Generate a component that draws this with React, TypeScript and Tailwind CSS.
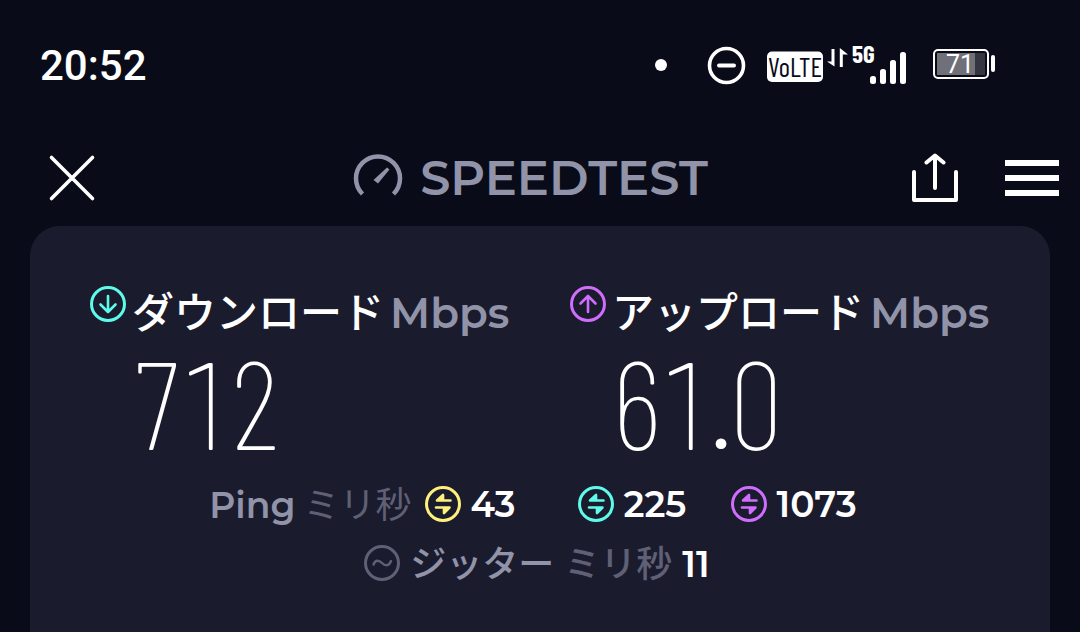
import type { ReactNode } from "react";

const LATIN = "font-['Montserrat',Inter,'Noto_Sans_CJK_JP',sans-serif]";
const NARROW = "font-['Barlow_Condensed','Roboto_Condensed',Roboto,sans-serif]";

function StatusBar() {
  return (
    <div className="flex h-[132px] items-center justify-between pl-10 pr-[84px] font-[Roboto,sans-serif] text-white">
      <time className="text-[42px] leading-[48px] font-medium">20:52</time>
      {/* system icons: notification dot, do-not-disturb, network, battery */}
      <svg width="342" height="72" viewBox="654 30 342 72" role="img" aria-label="System status">
        <circle cx="661" cy="65" r="6" fill="#fff" />
        <circle cx="726.500" cy="65.500" r="17" fill="none" stroke="#fff" strokeWidth="3.600" />
        <path d="M719 65.500h15" stroke="#fff" strokeWidth="4" strokeLinecap="round" />
        <rect x="767" y="51.500" width="56" height="30.500" rx="5" fill="#fff" />
        <text x="795" y="77" textAnchor="middle" className={`fill-[#0a0b19] ${NARROW} text-[27px]`}>VoLTE</text>
        <path d="M831.500 49h3v17.500L827 61.500h4.500z" fill="#fff" />
        <path d="M839.800 67h3V54.500H848L839.800 48z" fill="#fff" />
        <text x="852" y="63" className={`fill-white ${NARROW} text-[25px] font-bold`}>5G</text>
        <rect x="870" y="76" width="6" height="8" rx="2.500" fill="#fff" />
        <rect x="880" y="69" width="6" height="15" rx="2.500" fill="#fff" />
        <rect x="890" y="60" width="6" height="24" rx="2.500" fill="#fff" />
        <rect x="900" y="52" width="6" height="32" rx="2.500" fill="#fff" />
        <rect x="934" y="50" width="54" height="28" rx="4" fill="none" stroke="#fff" strokeWidth="2" />
        <rect x="937" y="53" width="48" height="22" fill="#353542" />
        <rect x="937" y="53" width="38" height="22" fill="#707078" />
        <rect x="991" y="55" width="4" height="17" rx="2" fill="#fff" />
        <text x="960" y="73" textAnchor="middle" className="fill-white text-[25px]">71</text>
      </svg>
    </div>
  );
}

function Header() {
  return (
    <header className="mb-0.5 flex h-[92px] items-center justify-between pl-12 pr-[21px]">
      <button type="button" aria-label="Close" className="flex w-[134px]">
        <svg width="48" height="48" viewBox="0 0 48 48" fill="none" stroke="#fff" strokeWidth="3.600" strokeLinecap="round">
          <path d="M3.500 3.500 44.500 44.500M44.500 3.500 3.500 44.500" />
        </svg>
      </button>
      <h1 className="flex items-center gap-[17px] text-[#9193a8]">
        <svg width="50" height="50" viewBox="353 152 50 50" aria-hidden="true">
          <path d="M362.500 193A22 22 0 1 1 393.500 193" fill="none" stroke="currentColor" strokeWidth="4.500" />
          <path d="M387 166.500 389.500 168.500 378 182.500 373.500 179z" fill="currentColor" />
        </svg>
        <span className={`${LATIN} text-[48px] leading-[50px] font-semibold`}>SPEEDTEST</span>
      </h1>
      <div className="flex w-[180px] items-center justify-end gap-[45px]">
        <button type="button" aria-label="Share">
          <svg width="50" height="50" viewBox="910 153 50 50" fill="none" stroke="#fff" strokeWidth="4" strokeLinecap="round" strokeLinejoin="round">
            <path d="M914 172V200H956V172M935 188V156M926.500 162.500 935 155.500 943.500 162.500" />
          </svg>
        </button>
        <button type="button" aria-label="Menu">
          <svg width="54" height="36" viewBox="0 0 54 36" fill="#fff">
            <path d="M0 0h54v6H0zM0 15h54v6H0zM0 30h54v6H0z" />
          </svg>
        </button>
      </div>
    </header>
  );
}

function RoundIcon({ className, children }: { className: string; children: ReactNode }) {
  return (
    <svg width="36" height="36" viewBox="0 0 36 36" fill="none" stroke="currentColor" strokeLinecap="round" strokeLinejoin="round" className={`shrink-0 ${className}`} aria-hidden="true">
      <circle cx="18" cy="18" r="16.500" strokeWidth="3" />
      {children}
    </svg>
  );
}

function Speed({ label, value, color, arrow }: { label: string; value: string; color: string; arrow: string }) {
  return (
    <section className="flex items-start gap-1.5">
      <RoundIcon className={color}>
        <path d={arrow} strokeWidth="2.600" />
      </RoundIcon>
      <div>
        <h2 className="flex items-baseline gap-1.5 whitespace-nowrap text-[42px] leading-[48px]">
          <span className="font-['Noto_Sans_CJK_JP',sans-serif] font-medium text-white">{label}</span>
          <span className={`${LATIN} font-semibold text-[#9193a8]`}>Mbps</span>
        </h2>
        <p className={`mt-2 ${NARROW} text-[124px] leading-[112px] font-extralight tabular-nums text-white`}>
          {value}
        </p>
      </div>
    </section>
  );
}

function Latency({ value, color }: { value: string; color: string }) {
  return (
    <span className="flex min-w-[108px] items-center gap-[9px]">
      <RoundIcon className={color}>
        {/* opposed half-arrows, filled at the barbs */}
        <path d="M25.500 14.500H12L18 9V14.500M11 21.500H24.500L19 27V21.500" fill="currentColor" strokeWidth="2.600" />
      </RoundIcon>
      <span className={`${LATIN} font-semibold text-white`}>{value}</span>
    </span>
  );
}

export default function App() {
  return (
    <div className="flex min-h-screen flex-col bg-[#0a0b19]">
      <StatusBar />
      <Header />
      <main className="mx-[30px] flex-1 rounded-t-[30px] bg-[#1b1b2e] pt-[60px] text-[36px] leading-[44px]">
        <div className="grid grid-cols-2 pl-[60px]">
          <Speed label="ダウンロード" value="712" color="text-[#5ffbea]" arrow="M18 10V26M10.500 18.500 18 26 25.500 18.500" />
          <Speed label="アップロード" value="61.0" color="text-[#cf6dfc]" arrow="M18 26V10M10.500 17.500 18 10 25.500 17.500" />
        </div>
        <div className="mt-[23px] flex items-center justify-center gap-[45px] pr-3.5">
          <div className="flex items-center gap-3.5">
            <span className="flex items-baseline gap-2">
              <span className={`${LATIN} font-semibold text-[#9193a8]`}>Ping</span>
              <span className="font-['Noto_Sans_CJK_JP',sans-serif] font-normal text-[#5f6075]">ミリ秒</span>
            </span>
            <Latency value="43" color="text-[#fff07c]" />
          </div>
          <Latency value="225" color="text-[#5ffbea]" />
          <Latency value="1073" color="text-[#cf6dfc]" />
        </div>
        <div className="mt-3 flex items-center justify-center gap-2.5 pr-1.5">
          <RoundIcon className="text-[#5f6075]">
            <path d="M9.500 19.500C11 15 14.500 14.500 18 18S25 21 27 16" strokeWidth="2.400" />
          </RoundIcon>
          <span className="flex items-baseline gap-2.5">
            <span className="font-['Noto_Sans_CJK_JP',sans-serif] font-medium text-[#9193a8]">ジッター</span>
            <span className="font-['Noto_Sans_CJK_JP',sans-serif] font-medium text-[#5f6075]">ミリ秒</span>
            <span className={`${LATIN} font-semibold text-white`}>11</span>
          </span>
        </div>
      </main>
    </div>
  );
}
